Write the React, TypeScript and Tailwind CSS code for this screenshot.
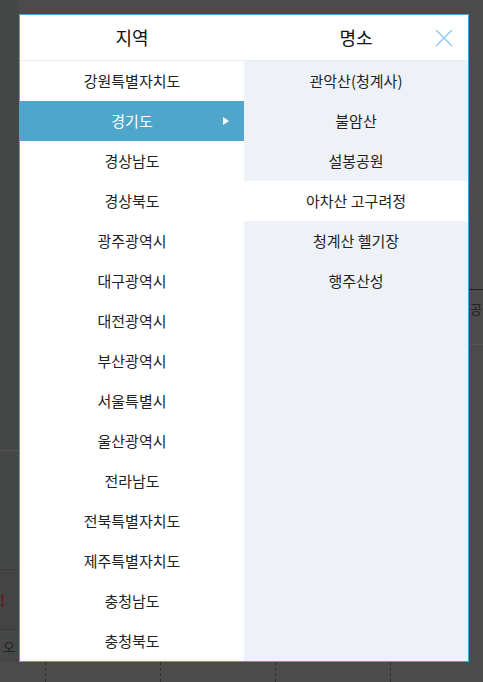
import { useState } from "react";

const regions = [
  "강원특별자치도",
  "경기도",
  "경상남도",
  "경상북도",
  "광주광역시",
  "대구광역시",
  "대전광역시",
  "부산광역시",
  "서울특별시",
  "울산광역시",
  "전라남도",
  "전북특별자치도",
  "제주특별자치도",
  "충청남도",
  "충청북도",
];

const places = ["관악산(청계사)", "불암산", "설봉공원", "아차산 고구려정", "청계산 헬기장", "행주산성"];

// dimmed page that sits underneath the modal
function Backdrop() {
  return (
    <div className="flex h-full w-full flex-col bg-[#4b4b4b]">
      <div className="flex flex-1">
        <div className="flex w-[19px] flex-col bg-[#464747]">
          <div className="h-[451px] border-b border-[#555]" />
          <div className="h-[119px] border-b border-[#3d3d3d]" />
          <div className="flex h-[60px] items-center border-b border-[#3a3a3a] bg-[#444] text-[15px] font-bold leading-none text-[#6b1a1a]">
            !
          </div>
          <div className="flex flex-1 items-center pl-[3px] text-[13px] leading-none text-[#222]">오</div>
        </div>
        <div className="flex-1" />
        <div className="flex w-[14px] flex-col">
          <div className="h-[290px] border-b border-[#222]" />
          <div className="flex h-[55px] items-start overflow-hidden border-b border-[#555] pl-[1px] pt-[12px] text-[13px] leading-none text-[#222]">
            공
          </div>
          <div className="flex-1" />
        </div>
      </div>
      <div className="grid h-[20px] grid-cols-[45px_115px_115px_115px_1fr]">
        <div />
        <div className="border-l border-dashed border-[#2f2f2f]" />
        <div className="border-l border-dashed border-[#2f2f2f]" />
        <div className="border-l border-dashed border-[#2f2f2f]" />
        <div className="border-l border-dashed border-[#2f2f2f]" />
      </div>
    </div>
  );
}

export default function App() {
  const [region, setRegion] = useState("경기도");
  const [hover] = useState("아차산 고구려정");

  return (
    <div
      className="relative h-[682px] w-[483px] overflow-hidden"
      style={{ fontFamily: '"Noto Sans CJK KR", "Noto Sans", sans-serif' }}
    >
      <Backdrop />

      {/* Modal */}
      <div className="absolute left-[19px] top-[14px] flex h-[648px] w-[450px] flex-col border border-[#4aa6d2] bg-white">
        {/* Header */}
        <div className="flex h-[46px] shrink-0 items-center border-b border-[#e9edf1] text-[18px] text-[#111]">
          <div className="flex w-[224px] justify-center">지역</div>
          <div className="grid flex-1 grid-cols-[33px_1fr_33px] items-center">
            <span />
            <span className="text-center">명소</span>
            <button className="flex text-[#8cc6ef]">
              <svg width="18" height="18" viewBox="0 0 18 18" fill="none" stroke="currentColor" strokeWidth="1.3">
                <path d="M1 1 L17 17 M17 1 L1 17" />
              </svg>
            </button>
          </div>
        </div>

        {/* Columns */}
        <div className="flex flex-1">
          <ul className="w-[224px] bg-white">
            {regions.map((r) => {
              const active = r === region;
              return (
                <li
                  key={r}
                  onClick={() => setRegion(r)}
                  className={`grid h-[40px] grid-cols-[24px_1fr_24px] items-center text-[15px] ${
                    active ? "bg-[#4ea6cb] text-white" : "text-[#222]"
                  }`}
                >
                  <span />
                  <span className="text-center">{r}</span>
                  <svg className={active ? "ml-[3px]" : "invisible"} width="6" height="8" viewBox="0 0 6 8" fill="white">
                    <path d="M0 0 L6 4 L0 8 Z" />
                  </svg>
                </li>
              );
            })}
          </ul>
          <ul className="flex-1 bg-[#eef2f7]">
            {places.map((p) => (
              <li
                key={p}
                className={`flex h-[40px] items-center justify-center text-[15px] text-[#222] ${
                  p === hover ? "bg-white" : ""
                }`}
              >
                {p}
              </li>
            ))}
          </ul>
        </div>
      </div>
    </div>
  );
}
